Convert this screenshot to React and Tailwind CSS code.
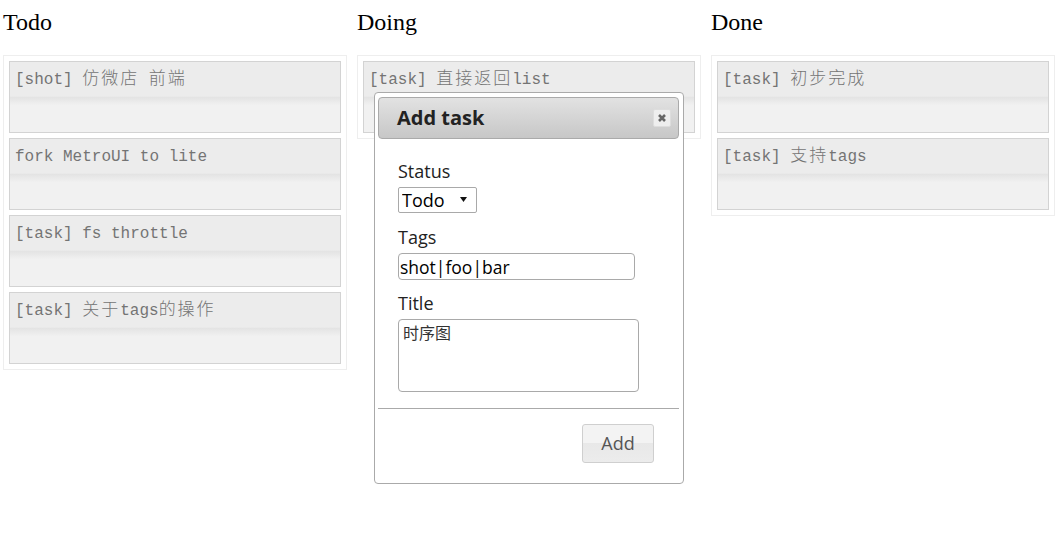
import React from "react";

const COLUMNS = [
  { title: "Todo", tasks: ["[shot] 仿微店 前端", "fork MetroUI to lite", "[task] fs throttle", "[task] 关于tags的操作"] },
  { title: "Doing", tasks: ["[task] 直接返回list"] },
  { title: "Done", tasks: ["[task] 初步完成", "[task] 支持tags"] },
];

const MONO = "font-['Liberation_Mono',monospace]";
const CJK = "font-['Noto_Sans_CJK_SC',sans-serif]";

// latin runs in mono, han runs in the CJK face, spaced to a double-width cell
const TaskText = ({ text }) => {
  const parts = text.split(/([\u4e00-\u9fff]+)/);
  return (
    <span>
      {parts.map((part, i) =>
        i % 2 === 1 ? (
          <span key={i} className={`${CJK} text-[17px] leading-[14px] tracking-[2px] font-light`}>
            {part}
          </span>
        ) : (
          <span key={i} className="whitespace-pre">{part}</span>
        )
      )}
    </span>
  );
};

const TaskCard = ({ text }) => (
  <div className="h-[72px] border border-[#d3d3d3] bg-[linear-gradient(to_bottom,#ececec_0%,#ececec_49%,#e3e3e3_50%,#f1f1f1_62%,#f1f1f1_100%)] px-[5px] pt-[7px]">
    <p className={`${MONO} text-[16px] leading-[22px] text-[#747474]`}>
      <TaskText text={text} />
    </p>
  </div>
);

const Column = ({ title, tasks }) => (
  <div className="w-[344px]">
    <h2 className="mb-[19px] font-['Liberation_Serif',serif] text-[24px] leading-[28px] text-black">{title}</h2>
    <div className="flex flex-col gap-[5px] border border-[#eeeeee] p-[5px]">
      {tasks.map((t) => (
        <TaskCard key={t} text={t} />
      ))}
    </div>
  </div>
);

const AddTaskDialog = () => (
  <div className="absolute left-[374px] top-[92px] h-[392px] w-[310px] rounded-[4px] border border-[#aaaaaa] bg-white pl-[3px] pr-[4px] pt-[4px] font-['Open_Sans',sans-serif]">
    <div className="flex h-[42px] items-center justify-between rounded-[4px] border border-[#aaaaaa] bg-[linear-gradient(to_bottom,#e2e2e2,#c7c7c7)] pl-[18px] pr-[7px]">
      <span className="text-[20px] font-bold text-[#222222]">Add task</span>
      <button className="flex h-[18px] w-[18px] items-center justify-center rounded-[2px] border border-[#dddddd] bg-[#eeeeee]">
        <svg width="10" height="10" viewBox="0 0 10 10">
          <path d="M2 2 L8 8 M8 2 L2 8" stroke="#666666" strokeWidth="2.6" />
        </svg>
      </button>
    </div>

    <div className="flex flex-col px-[20px] pt-[20px] text-[18px] text-[#222222]">
      <label className="leading-[24px]">Status</label>
      <div className="relative mt-[4px] h-[26px] w-[79px]">
        <select className="block h-[26px] w-[79px] appearance-none rounded-[2px] border border-[#a9a9a9] bg-white pl-[3px] text-[18px] leading-[24px] text-black">
          <option>Todo</option>
          <option>Doing</option>
          <option>Done</option>
        </select>
        <svg className="pointer-events-none absolute right-[10px] top-[10px]" width="7" height="5" viewBox="0 0 7 5">
          <polygon points="0,0 7,0 3.5,5" fill="#111111" />
        </svg>
      </div>

      <label className="mt-[12px] leading-[24px]">Tags</label>
      <input
        defaultValue="shot|foo|bar"
        className="mt-[4px] h-[27px] w-[237px] rounded-[4px] border border-[#a9a9a9] px-[1px] text-[17.5px] leading-[24px] text-black outline-none"
      />

      <label className="mt-[11px] leading-[24px]">Title</label>
      <textarea
        defaultValue="时序图"
        className={`${CJK} mt-[4px] h-[73px] w-[241px] resize-none rounded-[4px] border border-[#a9a9a9] px-[4px] pt-[1px] text-[16px] leading-[22px] text-[#333333] outline-none`}
      />
    </div>

    <div className="mt-[16px] border-t border-[#aaaaaa]" />

    <div className="flex justify-end pr-[25px] pt-[15px]">
      <button className="h-[39px] w-[72px] rounded-[3px] border border-[#cfcfcf] bg-[linear-gradient(to_bottom,#f3f3f3,#f3f3f3_50%,#e8e8e8_50%,#ececec)] text-[18px] text-[#555555]">
        Add
      </button>
    </div>
  </div>
);

export default function App() {
  return (
    <div className="relative min-h-[541px] bg-white pl-[3px] pt-[8px]">
      <div className="flex items-start gap-[10px]">
        {COLUMNS.map((c) => (
          <Column key={c.title} title={c.title} tasks={c.tasks} />
        ))}
      </div>
      <AddTaskDialog />
    </div>
  );
}
